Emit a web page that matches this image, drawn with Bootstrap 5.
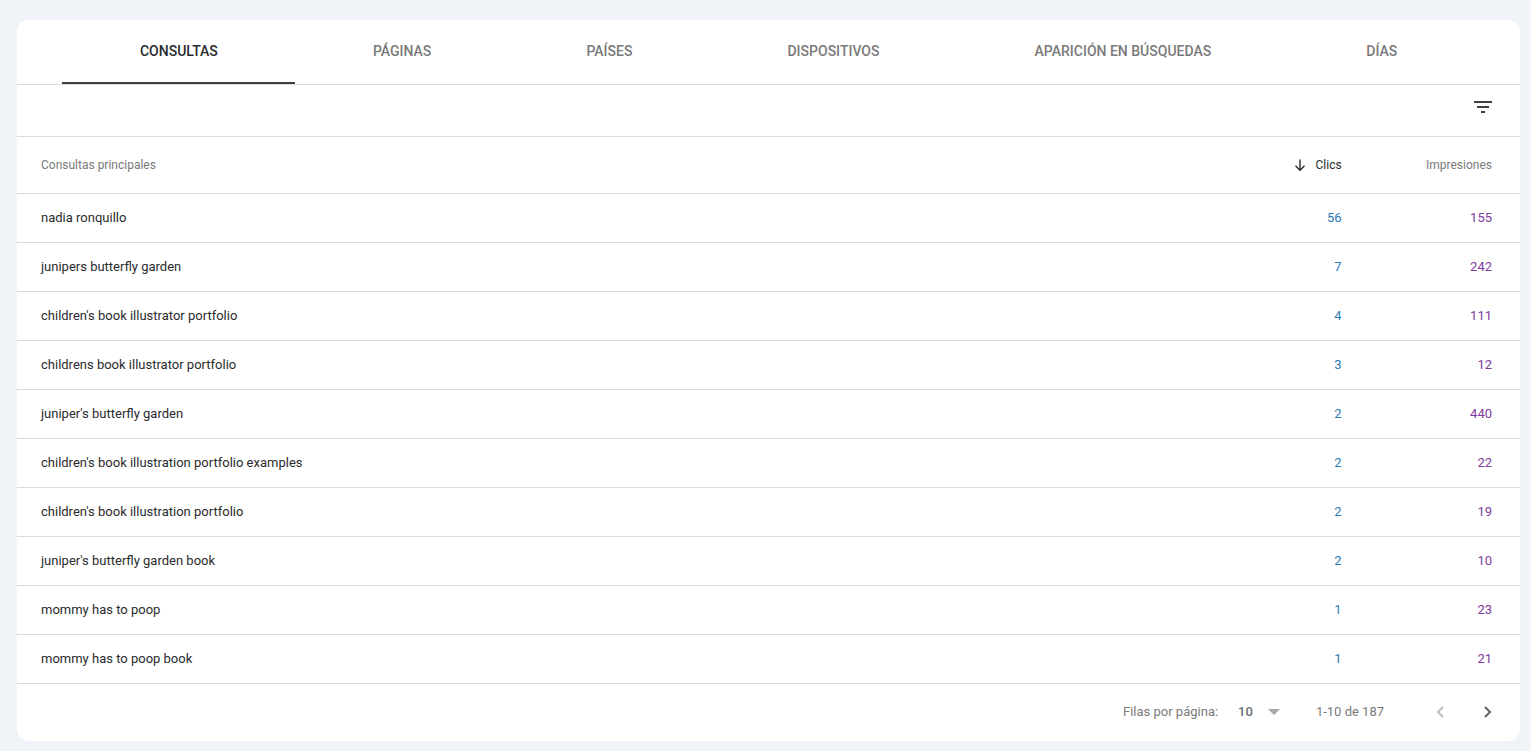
<!DOCTYPE html>
<html lang="es">
<head>
<meta charset="utf-8">
<title>Consultas</title>
<link href="https://cdn.jsdelivr.net/npm/bootstrap@5.3.0/dist/css/bootstrap.min.css" rel="stylesheet">
<style>
html,body{height:100%}
body{background:#f0f4f9;font-family:Roboto,"Liberation Sans",sans-serif;font-size:13px;color:#2a2b2e;overflow:hidden}
.sheet{margin:20px 11px 0 17px;height:721px;background:#fff;border-radius:12px;overflow:hidden}
.tabbar{height:65px;padding:0 43px 0 45.4px;border-bottom:1px solid #dadce0}
.tabitem{height:64px;padding:0 77.55px;font-size:14px;font-weight:500;color:#7a7a7a;flex:0 0 auto;line-height:63px;white-space:nowrap;text-align:center;border-bottom:2px solid transparent}
.tabitem.is-on{color:#2a2b2e;border-bottom-color:#3c4043}
.toolbar{height:52px;border-bottom:1px solid #dadce0;padding:0 27px 5px 0}
.qtable{margin:0;table-layout:fixed;width:100%;font-size:13px}
.qtable th,.qtable td{border-bottom:1px solid #dadce0;padding:0;vertical-align:middle;color:#2a2b2e;box-shadow:none}
.qtable thead th{height:56px;font-size:12px;font-weight:400;color:#7a7a7a}
.qtable tbody td{height:49px}
.qtable .c1{padding-left:24px}
.qtable .c2{width:150px;text-align:right}
.qtable .c3{width:178px;text-align:right;padding-right:28px}
.qtable thead th.sorted{color:#2a2b2e;padding-right:.4px}
.qtable td.clicks{color:#2a7ab8;padding-right:.5px}
.qtable td.impr{color:#7e3a9e}
.sort-ico{margin-right:8px;vertical-align:-3px}
.pager{height:57px;padding-right:28px;font-size:13px;color:#7a7a7a}
.rows-val{font-weight:500;color:#6a6d70;margin-left:20px}
.rows-caret{margin-left:15px;width:0;height:0;border-left:6.5px solid transparent;border-right:6.5px solid transparent;border-top:6px solid #a8a8a8;display:block}
.range{margin-left:36px;margin-right:52px}
.pg-ico{display:block}
.pg-next{margin-left:40px}
</style>
</head>
<body>
<div class="sheet">
  <nav class="tabbar d-flex">
    <div class="tabitem is-on">CONSULTAS</div>
    <div class="tabitem">PÁGINAS</div>
    <div class="tabitem">PAÍSES</div>
    <div class="tabitem">DISPOSITIVOS</div>
    <div class="tabitem">APARICIÓN EN BÚSQUEDAS</div>
    <div class="tabitem">DÍAS</div>
  </nav>
  <div class="toolbar d-flex align-items-center justify-content-end">
    <svg width="20" height="14" viewBox="0 0 20 14" fill="#3c4043" aria-hidden="true"><rect x="1" y="0" width="18" height="2"/><rect x="4" y="5" width="12" height="2"/><rect x="8" y="10" width="4" height="2"/></svg>
  </div>
  <table class="table qtable">
    <thead>
      <tr>
        <th class="c1">Consultas principales</th>
        <th class="c2 sorted"><svg class="sort-ico" width="14" height="14" viewBox="0 0 14 14" fill="none" stroke="#2a2b2e" stroke-width="1.4" aria-hidden="true"><path d="M7 1.5V12M2.500 7.700 7 12.200l4.500-4.500"/></svg>Clics</th>
        <th class="c3">Impresiones</th>
      </tr>
    </thead>
    <tbody>
      <tr><td class="c1">nadia ronquillo</td><td class="c2 clicks">56</td><td class="c3 impr">155</td></tr>
      <tr><td class="c1">junipers butterfly garden</td><td class="c2 clicks">7</td><td class="c3 impr">242</td></tr>
      <tr><td class="c1">children's book illustrator portfolio</td><td class="c2 clicks">4</td><td class="c3 impr">111</td></tr>
      <tr><td class="c1">childrens book illustrator portfolio</td><td class="c2 clicks">3</td><td class="c3 impr">12</td></tr>
      <tr><td class="c1">juniper's butterfly garden</td><td class="c2 clicks">2</td><td class="c3 impr">440</td></tr>
      <tr><td class="c1">children's book illustration portfolio examples</td><td class="c2 clicks">2</td><td class="c3 impr">22</td></tr>
      <tr><td class="c1">children's book illustration portfolio</td><td class="c2 clicks">2</td><td class="c3 impr">19</td></tr>
      <tr><td class="c1">juniper's butterfly garden book</td><td class="c2 clicks">2</td><td class="c3 impr">10</td></tr>
      <tr><td class="c1">mommy has to poop</td><td class="c2 clicks">1</td><td class="c3 impr">23</td></tr>
      <tr><td class="c1">mommy has to poop book</td><td class="c2 clicks">1</td><td class="c3 impr">21</td></tr>
    </tbody>
  </table>
  <div class="pager d-flex align-items-center justify-content-end">
    <span>Filas por página:</span>
    <span class="rows-val">10</span>
    <span class="rows-caret"></span>
    <span class="range">1-10 de 187</span>
    <svg class="pg-ico" width="8" height="12" viewBox="0 0 8 12" fill="none" stroke="#bdbdbd" stroke-width="2" aria-hidden="true"><path d="M7 1 2 6l5 5"/></svg>
    <svg class="pg-ico pg-next" width="8" height="12" viewBox="0 0 8 12" fill="none" stroke="#5f6368" stroke-width="2" aria-hidden="true"><path d="M1 1l5 5-5 5"/></svg>
  </div>
</div>
<script src="https://cdn.jsdelivr.net/npm/bootstrap@5.3.0/dist/js/bootstrap.bundle.min.js"></script>
</body>
</html>
